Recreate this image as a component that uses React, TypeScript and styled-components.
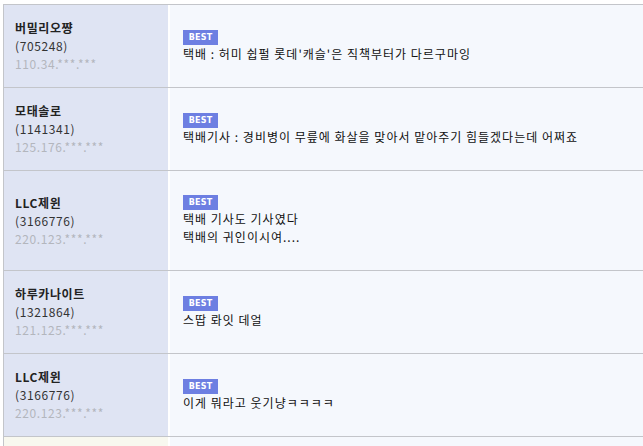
import React from "react";
import styled, { createGlobalStyle } from "styled-components";

const GlobalStyle = createGlobalStyle`
  html, body {
    margin: 0;
    padding: 0;
    background: #ffffff;
    overflow: hidden;
  }
  body {
    font-family: "Noto Sans CJK KR", "Noto Sans", sans-serif;
    font-size: 12px;
  }
`;

const Board = styled.div`
  margin: 4px 0 0 3px;
  border-top: 1px solid #c3c5ca;
  display: flex;
  flex-direction: column;
`;

const Row = styled.div<{ $cream?: boolean }>`
  display: grid;
  grid-template-columns: 165px 1fr;
  border-bottom: 1px solid #c3c5ca;
  min-height: ${props => (props.$cream ? "40px" : "auto")};
`;

const UserCell = styled.div<{ $cream?: boolean }>`
  border-left: 1px solid #c3c5ca;
  background-color: ${props => (props.$cream ? "#f8f8ef" : "#dfe4f3")};
  padding: 14px 11px;
  display: flex;
  flex-direction: column;
  justify-content: center;
  line-height: 18px;
  letter-spacing: 0.6px;
`;

const Nick = styled.div`
  font-weight: 700;
  color: #222222;
`;

const UserNo = styled.div`
  color: #333333;
`;

const Ip = styled.div`
  color: #b3b6bd;
`;

const CommentCell = styled.div`
  border-left: 2px solid #ffffff;
  background-color: #f5f8fd;
  padding: 24px 13px;
  display: flex;
  flex-direction: column;
  justify-content: center;
  align-items: flex-start;
`;

const Badge = styled.span`
  display: inline-flex;
  align-items: center;
  justify-content: center;
  width: 35px;
  height: 15px;
  background-color: #6d7fe2;
  color: #ffffff;
  font-family: "DejaVu Sans", "Noto Sans", sans-serif;
  font-size: 8px;
  font-weight: 700;
  letter-spacing: 0.2px;
`;

const Text = styled.div`
  color: #111111;
  line-height: 18px;
  letter-spacing: 1px;
  white-space: pre-line;
`;

type Comment = {
  nick: string;
  no: string;
  ip: string;
  text: string;
};

const comments: Comment[] = [
  {
    nick: "버밀리오쨩",
    no: "(705248)",
    ip: "110.34.***.***",
    text: "택배 : 허미 쉽펄 롯데'캐슬'은 직책부터가 다르구마잉"
  },
  {
    nick: "모태솔로",
    no: "(1141341)",
    ip: "125.176.***.***",
    text: "택배기사 : 경비병이 무릎에 화살을 맞아서 맡아주기 힘들겠다는데 어쩌죠"
  },
  {
    nick: "LLC제윈",
    no: "(3166776)",
    ip: "220.123.***.***",
    text: "택배 기사도 기사였다\n택배의 귀인이시여...."
  },
  {
    nick: "하루카나이트",
    no: "(1321864)",
    ip: "121.125.***.***",
    text: "스땁 롸잇 데얼"
  },
  {
    nick: "LLC제윈",
    no: "(3166776)",
    ip: "220.123.***.***",
    text: "이게 뭐라고 웃기냥ㅋㅋㅋㅋ"
  }
];

const App = () => {
  return (
    <>
      <GlobalStyle />
      <Board>
        {comments.map((c, i) => (
          <Row key={i}>
            <UserCell>
              <Nick>{c.nick}</Nick>
              <UserNo>{c.no}</UserNo>
              <Ip>{c.ip}</Ip>
            </UserCell>
            <CommentCell>
              <Badge>BEST</Badge>
              <Text>{c.text}</Text>
            </CommentCell>
          </Row>
        ))}
        <Row $cream>
          <UserCell $cream />
          <CommentCell />
        </Row>
      </Board>
    </>
  );
};

export default App;
